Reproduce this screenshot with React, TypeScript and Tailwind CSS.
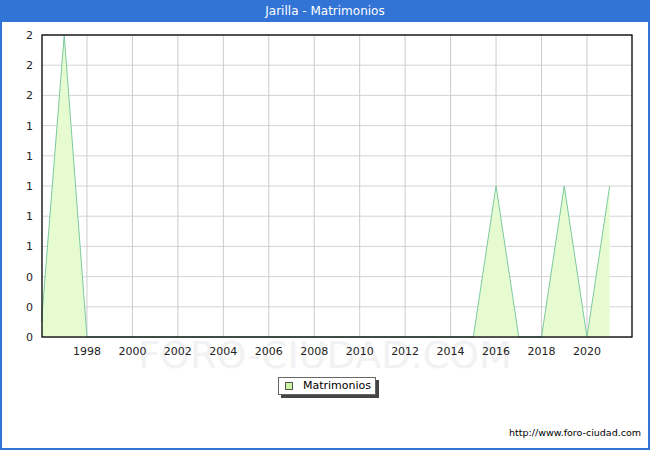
export default function App() {
  const x0 = 40, x1 = 630, y0 = 35, y1 = 337
  const px = (yr: number) => x0 + (yr - 1996) * ((585 - 85) / 22) - 0.5
  const py = (v: number) => y1 - (v / 2) * (y1 - y0)
  const data: [number, number][] = [
    [1996, 0.1], [1997, 2], [1998, 0], [1999, 0], [2014, 0], [2015, 0], [2016, 1], [2017, 0],
    [2018, 0], [2019, 1], [2020, 0], [2021, 1],
  ]
  const line = data.map(([x, v]) => `${px(x)},${py(v)}`).join(' ')
  const area = `${px(1996)},${y1} ${line} ${px(2021)},${y1}`
  const yLabels = ['2', '2', '2', '1', '1', '1', '1', '1', '0', '0', '0']
  const years = [1998, 2000, 2002, 2004, 2006, 2008, 2010, 2012, 2014, 2016, 2018, 2020]
  return (
    <div className="relative w-[650px] h-[450px] bg-white flex flex-col border-x-2 border-b-2 border-[#3273d6] font-[DejaVu_Sans,sans-serif]">
      <svg width="646" height="448" className="absolute left-0 top-0" fontFamily="DejaVu Sans, sans-serif">
        <text x="323" y="368" textAnchor="middle" fontSize="38" fill="#f2f2f5">FORO-CIUDAD.COM</text>
        {yLabels.map((l, i) => {
          const y = y0 + i * ((y1 - y0) / 10)
          return (
            <g key={i}>
              <line x1={x0} x2={x1} y1={y} y2={y} stroke="#d4d4d4" />
              <text x="31" y={y + 4} textAnchor="end" fontSize="11" fill="#222">{l}</text>
            </g>
          )
        })}
        {years.map((yr) => (
          <g key={yr}>
            <line x1={px(yr)} x2={px(yr)} y1={y0} y2={y1} stroke="#cccccc" />
            <text x={px(yr)} y="355" textAnchor="middle" fontSize="11" fill="#222">{yr}</text>
          </g>
        ))}
        <polygon points={area} fill="#e6fcd0" />
        <polyline points={line} fill="none" stroke="#7cc9a0" strokeWidth="1" />
        <rect x={x0} y={y0} width={x1 - x0} height={y1 - y0} fill="none" stroke="#000" strokeWidth="1.3" />
      </svg>
      <div className="relative h-[22px] bg-[#3273d6] text-white text-[12px] flex items-center justify-center shrink-0 -mx-[2px]">
        Jarilla - Matrimonios
      </div>
      <div className="absolute left-[276px] top-[377px] w-[98px] h-[18px] bg-white border border-[#666] shadow-[3px_3px_0_#444] flex items-center text-[11px] text-black">
        <span className="w-[8px] h-[8px] bg-[#ccf5a0] border border-[#555] ml-[6px] mr-[10px]" />
        Matrimonios
      </div>
      <div className="absolute right-[7px] bottom-[8px] text-[9.5px] text-black">http://www.foro-ciudad.com</div>
    </div>
  )
}
